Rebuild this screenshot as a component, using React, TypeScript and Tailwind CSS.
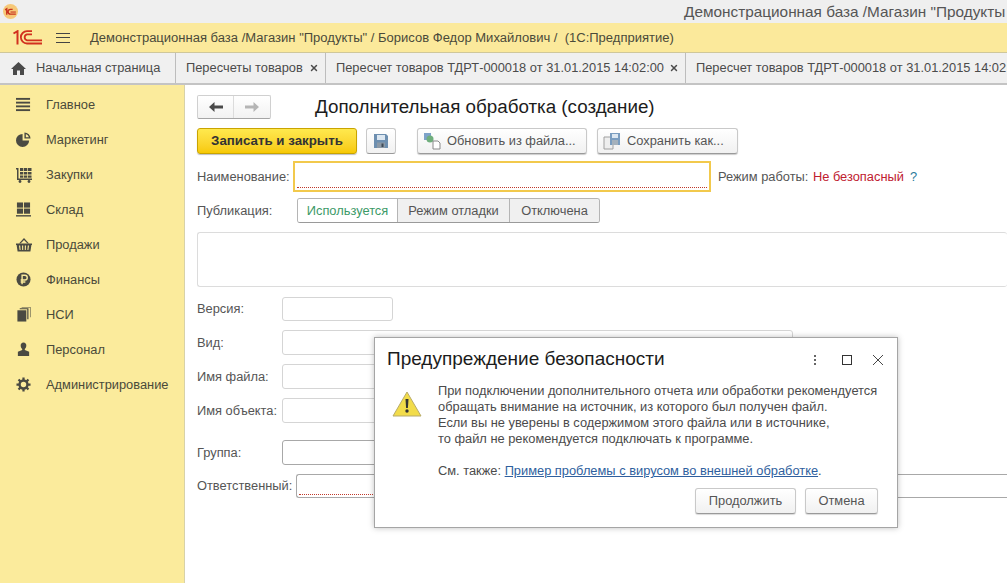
import { Fragment, ReactNode } from "react";
import { X } from "lucide-react";

const menu: [string, ReactNode][] = [
  ["Главное", <svg key="a" viewBox="0 0 16 16" className="w-[15px] h-[15px]" fill="#4a4a42"><rect x="0" y="1" width="15" height="2" /><rect x="0" y="5" width="15" height="2" /><rect x="0" y="9" width="15" height="2" /><rect x="0" y="13" width="15" height="2" /></svg>],
  ["Маркетинг", <svg key="b" viewBox="0 0 16 16" className="w-[15px] h-[15px]" fill="#4a4a42"><path d="M7 2a7 7 0 1 0 7 7H7z" /><path d="M9 .5A6.5 6.5 0 0 1 15.500 7H9zM10.500 2.200V5.500h3.300a5 5 0 0 0-3.300-3.300z" fillRule="evenodd" /></svg>],
  ["Закупки", <svg key="c" viewBox="0 0 16 16" className="w-[16px] h-[16px]" fill="#4a4a42"><path d="M0 1h2.500v10.500H16V13H1V2.500H0z" /><rect x="4" y="1" width="3.300" height="3" /><rect x="8" y="1" width="3.300" height="3" /><rect x="12" y="1" width="3.500" height="3" /><rect x="4" y="5" width="3.300" height="2.500" /><rect x="8" y="5" width="3.300" height="2.500" /><rect x="12" y="5" width="3.500" height="2.500" /><rect x="4" y="8.500" width="3.300" height="2.200" /><rect x="8" y="8.500" width="3.300" height="2.200" /><rect x="12" y="8.500" width="3.500" height="2.200" /><circle cx="4" cy="14.500" r="1.400" /><circle cx="13" cy="14.500" r="1.400" /></svg>],
  ["Склад", <svg key="d" viewBox="0 0 16 16" className="w-[15px] h-[15px]" fill="#4a4a42"><rect x="1" y="0.500" width="6.500" height="5.500" /><rect x="8.500" y="0.500" width="6.500" height="5.500" /><rect x="1" y="7" width="6.500" height="5.500" /><rect x="8.500" y="7" width="6.500" height="5.500" /><rect x="0" y="14" width="16" height="1.500" /></svg>],
  ["Продажи", <svg key="e" viewBox="0 0 16 16" className="w-[16px] h-[16px]" fill="#4a4a42"><path d="M8 1 3 6.500h1.500L8 3l3.500 3.500H13z" /><path d="M0 6.500h16V8h-.6l-1 6.500H1.600L.6 8H0zM3 8.500l.6 4.500h1L4.200 8.500zM6 8.500 6.200 13h1V8.500zM8.800 8.500V13h1l.2-4.500zM11.800 8.500 11.400 13h1l.6-4.500z" fillRule="evenodd" /></svg>],
  ["Финансы", <svg key="f" viewBox="0 0 16 16" className="w-[15px] h-[15px]"><circle cx="8" cy="8" r="7.500" fill="#4a4a42" /><path d="M6.500 13V3.500h3a2.500 2.500 0 0 1 0 5h-4.500M5 10.700h5" fill="none" stroke="#fbeb9c" strokeWidth="1.500" /></svg>],
  ["НСИ", <svg key="g" viewBox="0 0 16 16" className="w-[15px] h-[15px]" fill="#4a4a42"><rect x="1.500" y="3.500" width="9.500" height="12" /><path d="M12 2.500h-8V1.200h9.300V13H12z" /><path d="M14.300 0H6v.6h8.900V11h.6V0z" /></svg>],
  ["Персонал", <svg key="h" viewBox="0 0 16 16" className="w-[15px] h-[15px]" fill="#4a4a42"><path d="M8 .5c2 0 3 1.400 3 3.300 0 1.500-.6 3-1.600 3.700v1l4.600 2V15H2v-4.500l4.600-2v-1C5.600 6.800 5 5.300 5 3.800 5 1.900 6 .5 8 .5z" /></svg>],
  ["Администрирование", <svg key="i" viewBox="0 0 16 16" className="w-[15px] h-[15px]"><circle cx="8" cy="8" r="4.200" fill="none" stroke="#4a4a42" strokeWidth="2.600" /><path d="M8 .5v3M8 12.500v3M.5 8h3M12.500 8h3M2.700 2.700l2.200 2.200M11.100 11.100l2.200 2.200M13.300 2.700l-2.200 2.200M4.900 11.100l-2.200 2.200" stroke="#4a4a42" strokeWidth="2.400" /></svg>],
];

function ToolButton({ icon, label, w }: { icon: ReactNode; label: string; w: string }) {
  return (
    <div className={`${w} h-[26px] flex items-center pl-[5px] gap-[6px] rounded-[3px] border border-[#c9c9c9] border-b-[#9a9a9a] bg-gradient-to-b from-white to-[#f1f1f1] shadow-[0_1px_1px_rgba(0,0,0,0.2)] text-[#555]`}>
      {icon}
      <span>{label}</span>
    </div>
  );
}

function FieldRow({ label, input, mt }: { label: string; input: string; mt: string }) {
  return (
    <div className={`flex items-center ${mt}`}>
      <span className="w-[85px] shrink-0 text-[#555]">{label}</span>
      <div className={input} />
    </div>
  );
}

export default function App() {
  return (
    <div className="w-[1007px] h-[583px] relative overflow-hidden bg-white text-[12.850px] text-[#4b4b4b] flex flex-col" style={{ fontFamily: '"Liberation Sans", Arial, sans-serif' }}>
      {/* заголовок окна */}
      <div className="h-[23px] shrink-0 bg-[#efefef] flex items-center justify-between pl-[3px] overflow-hidden whitespace-nowrap">
        <svg viewBox="0 0 14 14" className="w-[15px] h-[15px]">
          <circle cx="7" cy="7" r="7" fill="#f6c878" />
          <path d="M2 5.500 3.500 4.500V10M9 5H7a2 2 0 0 0 0 4.500h5" fill="none" stroke="#c8321e" strokeWidth="1.300" />
          <path d="M7 7.500h5" stroke="#c8321e" strokeWidth="1" />
        </svg>
        <span className="text-[15.350px] text-[#555] w-[323px] shrink-0">Демонстрационная база /Магазин "Продукты</span>
      </div>

      {/* желтая полоса */}
      <div className="h-[30px] shrink-0 bg-[#fbe99b] border-b border-[#cfc79a] flex items-center whitespace-nowrap">
        <svg viewBox="0 0 29 15" className="w-[29px] h-[15px] ml-[13px]" fill="none" stroke="#d2301f">
          <path d="M0.500 3.500 4.500 1.200V14.500" strokeWidth="2" />
          <path d="M19 1.200H14A6 6 0 0 0 14 13.500H29" strokeWidth="1.800" />
          <path d="M29 10.300H14A3.100 3.100 0 0 1 14 4.300H19" strokeWidth="1.800" />
        </svg>
        <div className="ml-[14px] w-[14px] flex flex-col gap-[3.500px]">
          <div className="h-px bg-[#444]" />
          <div className="h-px bg-[#444]" />
          <div className="h-px bg-[#444]" />
        </div>
        <span className="ml-[20px] text-[13.030px] text-[#4a4a3a]">Демонстрационная база /Магазин "Продукты" / Борисов Федор Михайлович /&nbsp; (1С:Предприятие)</span>
      </div>

      {/* вкладки */}
      <div className="h-[32px] shrink-0 bg-[#f0f0f0] border-b-2 border-[#c4c4c4] flex whitespace-nowrap overflow-hidden">
        <div className="w-[176px] shrink-0 border-r border-[#bdbdbd] flex items-center pl-[11px] gap-[10px]">
          <svg viewBox="0 0 15 13" className="w-[15px] h-[13px]" fill="#4a4a4a"><path d="M7.500 0 15 7h-2v6H9V8.500H6V13H2V7H0z" /></svg>
          <span>Начальная страница</span>
        </div>
        <div className="w-[150px] shrink-0 border-r border-[#bdbdbd] flex items-center pl-[10px] gap-[6px]">
          <span>Пересчеты товаров</span>
          <X size={10} strokeWidth={3.500} />
        </div>
        <div className="w-[360px] shrink-0 border-r border-[#bdbdbd] flex items-center pl-[10px] gap-[5px]">
          <span>Пересчет товаров ТДРТ-000018 от 31.01.2015 14:02:00</span>
          <X size={10} strokeWidth={3.500} />
        </div>
        <div className="flex items-center pl-[10px]">
          <span>Пересчет товаров ТДРТ-000018 от 31.01.2015 14:02:00</span>
        </div>
      </div>

      <div className="flex flex-1 min-h-0">
        {/* левое меню */}
        <div className="w-[185px] shrink-0 bg-[#fbeb9c] border-r border-[#d8d2a8] pt-[2px]">
          {menu.map(([label, icon]) => (
            <div key={label} className="h-[35px] flex items-center text-[#4a4a3a]">
              <div className="w-[46px] pl-[16px] flex items-center shrink-0">{icon}</div>
              <span>{label}</span>
            </div>
          ))}
        </div>

        {/* форма */}
        <div className="flex-1 min-w-0 pl-[12px] pt-[9px]">
          <div className="flex items-center h-[26px]">
            <div className="w-[74px] h-[24px] flex rounded-[2px] border border-[#d0d0d0] border-b-[#a5a5a5] bg-gradient-to-b from-white to-[#f2f2f2]">
              <div className="w-[36px] border-r border-[#dcdcdc] flex items-center justify-center">
                <svg viewBox="0 0 14 10" className="w-[14px] h-[10px]" fill="#4a4a4a"><path d="M0 5 5.500 0v3.500H14v3H5.500V10z" /></svg>
              </div>
              <div className="flex-1 flex items-center justify-center">
                <svg viewBox="0 0 14 10" className="w-[14px] h-[10px]" fill="#b5b5b5"><path d="M14 5 8.500 0v3.500H0v3h8.500V10z" /></svg>
              </div>
            </div>
            <h1 className="ml-[44px] text-[18.800px] text-[#1c1c1c] font-normal">Дополнительная обработка (создание)</h1>
          </div>

          <div className="flex items-center mt-[8px] h-[26px]">
            <div className="w-[160px] h-[26px] flex items-center justify-center rounded-[3px] border border-[#c9a400] bg-gradient-to-b from-[#ffe94d] to-[#f7c900] text-[13.300px] font-bold text-[#333] shadow-[0_1px_1px_rgba(0,0,0,0.25)]">Записать и закрыть</div>
            <div className="ml-[9px] w-[30px] h-[26px] flex items-center justify-center rounded-[3px] border border-[#c9c9c9] border-b-[#9a9a9a] bg-gradient-to-b from-white to-[#f1f1f1]">
              <svg viewBox="0 0 14 14" className="w-[14px] h-[14px]"><path d="M0 0h12l2 2v12H0z" fill="#6d8fb0" /><rect x="3" y="1" width="8" height="5" fill="#dce7f1" /><rect x="3" y="8.500" width="8" height="5.500" fill="#8c99a6" /><rect x="7.500" y="9.500" width="2" height="3.500" fill="#3d4a57" /></svg>
            </div>
            <div className="ml-[21px]">
              <ToolButton w="w-[170px]" label="Обновить из файла..." icon={
                <svg viewBox="0 0 18 18" className="w-[18px] h-[18px]"><rect x="1" y="1" width="7" height="7" fill="#7ea3c9" /><circle cx="7" cy="7" r="3.500" fill="#6fae7c" /><path d="M10 9h5l2 2v6h-7z" fill="#fff" stroke="#8a8a8a" /></svg>
              } />
            </div>
            <div className="ml-[10px]">
              <ToolButton w="w-[141px]" label="Сохранить как..." icon={
                <svg viewBox="0 0 18 18" className="w-[18px] h-[18px]"><path d="M1 5h7l2 2v10H1z" fill="#eee" stroke="#a0a0a0" /><path d="M7 1h10v12H7z" fill="#7a9dc0" /><rect x="9" y="2" width="6" height="4" fill="#dce7f1" /><rect x="9" y="8" width="6" height="5" fill="#a5b1bc" /></svg>
              } />
            </div>
          </div>

          <div className="flex items-center mt-[7px] h-[31px]">
            <span className="w-[96px] shrink-0 text-[#555]">Наименование:</span>
            <div className="w-[418px] h-[31px] border-2 border-[#f2c94c] px-[2px] pb-[2px] flex items-end">
              <div className="w-full border-b border-dotted border-[#c0392b]" />
            </div>
            <span className="ml-[7px] text-[#555]">Режим работы: <span className="text-[#c0202f] ml-[1px]">Не безопасный</span><span className="text-[#2b7a9b] ml-[6px]">?</span></span>
          </div>

          <div className="flex items-center mt-[6px] h-[25px]">
            <span className="w-[100px] shrink-0 text-[#555]">Публикация:</span>
            <div className="flex h-[25px] rounded-[3px] border border-[#b5b5b5] border-b-[#9a9a9a] overflow-hidden">
              <div className="w-[100px] flex items-center justify-center bg-white text-[#3c9a68] border-r border-[#b5b5b5]">Используется</div>
              <div className="w-[112px] flex items-center justify-center bg-[#f0f0f0] border-r border-[#b5b5b5] text-[#555]">Режим отладки</div>
              <div className="w-[89px] flex items-center justify-center bg-[#f0f0f0] text-[#555]">Отключена</div>
            </div>
          </div>

          <div className="mt-[9px] h-[55px] rounded-[3px] border border-[#dcdcdc] border-r-0" />

          <FieldRow mt="mt-[10px]" label="Версия:" input="w-[111px] h-[24px] rounded-[3px] border border-[#d5d5d5]" />
          <FieldRow mt="mt-[9px]" label="Вид:" input="w-[511px] h-[25px] rounded-[3px] border border-[#d5d5d5]" />
          <FieldRow mt="mt-[9px]" label="Имя файла:" input="w-[300px] h-[25px] rounded-[3px] border border-[#d5d5d5]" />
          <FieldRow mt="mt-[9px]" label="Имя объекта:" input="w-[300px] h-[25px] rounded-[3px] border border-[#d5d5d5]" />
          <FieldRow mt="mt-[17px]" label="Группа:" input="w-[300px] h-[25px] rounded-[3px] border border-[#a8a8a8]" />
          <div className="flex items-center mt-[9px]">
            <span className="w-[99px] shrink-0 text-[#555]">Ответственный:</span>
            <div className="flex-1 h-[24px] rounded-l-[3px] border border-r-0 border-[#a8a8a8] pl-[2px] pb-[2px] flex items-end">
              <div className="w-[100px] border-b border-dotted border-[#c0392b]" />
            </div>
          </div>
        </div>
      </div>

      {/* предупреждение */}
      <div className="absolute left-[374px] top-[337px] w-[524px] h-[191px] bg-white border border-[#a5a5a5] shadow-[0_0_6px_rgba(0,0,0,0.25)]">
        <div className="flex items-center h-[42px] pl-[12px] pt-[1px]">
          <h2 className="text-[19px] text-[#1c1c1c] font-normal flex-1 whitespace-nowrap">Предупреждение безопасности</h2>
          <div className="flex flex-col gap-[2px] mr-[26px]">
            {[0, 1, 2].map((i) => (
              <Fragment key={i}><div className="w-[2px] h-[2px] bg-[#666]" /></Fragment>
            ))}
          </div>
          <div className="w-[10px] h-[10px] border border-[#333] mr-[21px]" />
          <svg viewBox="0 0 10 10" className="w-[10px] h-[10px] mr-[14px]" stroke="#333" strokeWidth="0.900"><path d="M0 0 10 10M10 0 0 10" /></svg>
        </div>
        <div className="flex pt-[3px]">
          <div className="w-[63px] pl-[17px] pt-[8px] shrink-0">
            <svg viewBox="0 0 30 26" className="w-[30px] h-[26px]">
              <path d="M15 1 29 25H1z" fill="#f2dc4a" stroke="#b8ab6a" strokeLinejoin="round" />
              <path d="M13.500 8h3l-.6 9h-1.800z" fill="#333" />
              <circle cx="15" cy="20" r="1.700" fill="#333" />
            </svg>
          </div>
          <div className="leading-[16px] text-[#4b4b4b] whitespace-nowrap">
            <div>При подключении дополнительного отчета или обработки рекомендуется</div>
            <div>обращать внимание на источник, из которого был получен файл.</div>
            <div>Если вы не уверены в содержимом этого файла или в источнике,</div>
            <div>то файл не рекомендуется подключать к программе.</div>
            <div className="mt-[16px]">См. также: <span className="text-[#2f5f9e] underline">Пример проблемы с вирусом во внешней обработке</span>.</div>
          </div>
        </div>
        <div className="flex justify-end gap-[9px] pr-[19px] mt-[9px]">
          <div className="w-[101px] h-[26px] flex items-center justify-center rounded-[3px] border border-[#c9c9c9] border-b-[#9a9a9a] bg-gradient-to-b from-white to-[#f1f1f1] text-[#555] shadow-[0_1px_1px_rgba(0,0,0,0.15)]">Продолжить</div>
          <div className="w-[73px] h-[26px] flex items-center justify-center rounded-[3px] border border-[#c9c9c9] border-b-[#9a9a9a] bg-gradient-to-b from-white to-[#f1f1f1] text-[#555] shadow-[0_1px_1px_rgba(0,0,0,0.15)]">Отмена</div>
        </div>
      </div>
    </div>
  );
}
